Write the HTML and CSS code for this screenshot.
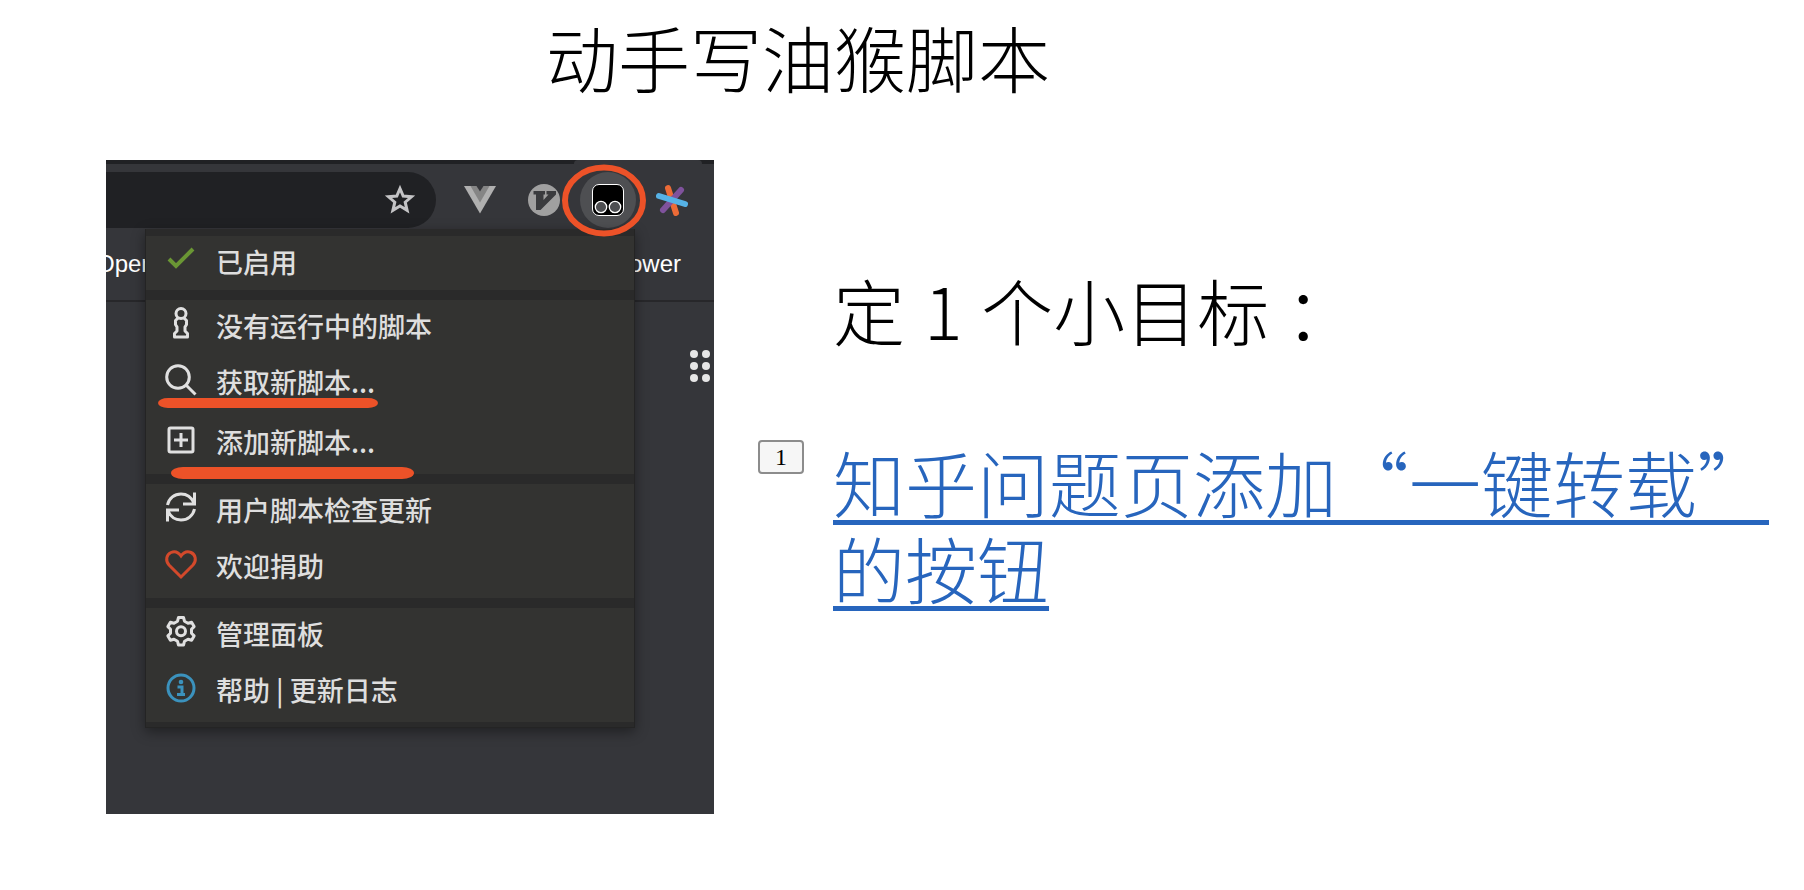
FILE: index.html
```
<!DOCTYPE html>
<html lang="zh-CN">
<head>
  <meta charset="UTF-8" />
  <meta name="viewport" content="width=device-width, initial-scale=1.0"/>
  <title>动手写油猴脚本</title>
  <link rel="stylesheet" href="styles.css">
</head>
<body>
  <h1>动手写油猴脚本</h1>

  <main class="slide">
    <div class="browser">
      <div class="tabs"><div class="tab"></div></div>
      <div class="toolbar">
        <div class="address">
          <svg width="32" height="32" viewBox="0 0 32 32" fill="none" stroke="#c4c4c6" stroke-width="3"><path d="M16 4.500l3.200 7.600 8.300.7-6.300 5.400 1.900 8.100-7.100-4.300-7.100 4.300 1.900-8.100-6.300-5.400 8.300-.7z"/></svg>
        </div>
        <div class="extensions">
          <button class="extension" aria-label="Vue">
            <svg width="32" height="32" viewBox="0 0 32 32"><path fill="#b0b0b0" d="M0 2h32L16 29.500z"/><path fill="#858585" d="M6.500 2h19L16 18.500z"/><path fill="#35363a" d="M12.500 2h7L16 7.500z"/></svg>
          </button>
          <button class="extension" aria-label="Vimium">
            <svg width="32" height="32" viewBox="0 0 32 32"><circle cx="16" cy="16" r="16" fill="#a0a0a0"/><path fill="#3a3b3e" d="M5.500 7h11.500v3.500h-1.500v5.500l5-5.500h-2V7H28v3.500L12.500 26H8V10.500H5.500z"/></svg>
          </button>
          <button class="extension current" aria-label="Tampermonkey">
            <svg width="32" height="32" viewBox="0 0 32 32"><rect x=".5" y=".5" width="31" height="31" rx="6.500" fill="#000" stroke="#fff"/><g fill="#4e4f52" stroke="#fff" stroke-width="1.300"><circle cx="9" cy="23" r="5.700"/><circle cx="23" cy="23" r="5.700"/></g></svg>
          </button>
          <button class="extension" aria-label="扩展">
            <svg width="32" height="32" viewBox="0 0 32 32" stroke-width="6" stroke-linecap="round"><path stroke="#ec6b37" d="M12 4l8 25"/><path stroke="#7f529c" d="M25 6L7 26"/><path stroke="#56b2e6" d="M3 12l26 8"/></svg>
          </button>
        </div>
      </div>
      <div class="bookmarks">
        <span>Open</span>
        <span>Power</span>
      </div>
      <div class="page">
        <svg width="20" height="32" viewBox="0 0 20 32" fill="#e6e6e6"><circle cx="4" cy="4" r="4"/><circle cx="16" cy="4" r="4"/><circle cx="4" cy="16" r="4"/><circle cx="16" cy="16" r="4"/><circle cx="4" cy="28" r="4"/><circle cx="16" cy="28" r="4"/></svg>
      </div>

      <div class="menu">
        <div class="group">
          <button class="item">
            <svg viewBox="0 0 34 40" stroke="#6a9634"><path stroke-width="4" d="M5 17l7 7L29 7"/></svg>
            已启用
          </button>
        </div>
        <div class="group">
          <button class="item">
            <svg viewBox="0 0 34 40"><circle cx="17" cy="7.500" r="5"/><path stroke-linejoin="round" d="M14 12l-2.500 2.500v4l1.500 2.500v4l-2.500 2.500V31h13v-3.500L21 25v-4l1.500-2.500v-4L20 12"/></svg>
            没有运行中的脚本
          </button>
          <button class="item">
            <svg viewBox="0 0 34 40"><circle cx="14" cy="15" r="11.300"/><path d="M22.500 23.500l9 9"/></svg>
            获取新脚本...
          </button>
          <button class="item add">
            <svg viewBox="0 0 34 40"><rect x="5" y="6" width="24" height="24" rx="1.500"/><path d="M17 11v14M10 18h14"/></svg>
            添加新脚本...
          </button>
        </div>
        <div class="group">
          <button class="item">
            <svg viewBox="0 0 34 40"><path d="M3.500 15C5 8 10.500 4 17 4c6 0 10.500 3.500 13 9M30.500 2.500V14H19M30.500 19C29 26 23.500 30 17 30c-6 0-10.500-3.500-13-9M3.500 31.500V20H15"/></svg>
            用户脚本检查更新
          </button>
          <button class="item">
            <svg viewBox="0 0 34 40" stroke="#d3492b"><path d="M17 31L5 19C1 14.500 2.500 8.500 7 6.500c4-1.700 7.500 0 10 3.500 2.500-3.500 6-5.200 10-3.500 4.500 2 6 8 2 12.500z"/></svg>
            欢迎捐助
          </button>
        </div>
        <div class="group">
          <button class="item">
            <svg viewBox="0 0 34 40"><path stroke-linejoin="round" d="M14.500 3.500h5l1 3.700 3.500 2 3.600-1 2.500 4.400-2.600 2.700v3.900l2.600 2.700-2.500 4.400-3.600-1-3.500 2-1 3.700h-5l-1-3.700-3.500-2-3.600 1-2.500-4.400 2.600-2.700v-3.900l-2.600-2.700 2.500-4.400 3.600 1 3.500-2z"/><circle cx="17" cy="17.300" r="4.500"/></svg>
            管理面板
          </button>
          <button class="item">
            <svg viewBox="0 0 34 40" stroke="#3b92bd"><circle cx="17" cy="18" r="13"/><circle cx="17" cy="12" r="2.300" fill="#3b92bd" stroke="none"/><path d="M13.500 17H18v7M13 24.500h8"/></svg>
            帮助 | 更新日志
          </button>
        </div>
      </div>

      <!-- red marker strokes -->
      <svg class="marker" viewBox="0 0 608 654" fill="none">
        <ellipse cx="498" cy="40.500" rx="39" ry="33" stroke="#ed5228" stroke-width="6"/>
        <rect x="52" y="238" width="220" height="10" rx="10" ry="5" fill="#ed5228"/>
        <rect x="65" y="307" width="243" height="12" rx="12" ry="6" fill="#ed5228"/>
      </svg>
    </div>

    <div class="goal">
      <p>定 <span class="number">1</span> 个小目标 ：</p>
      <span class="step">1</span>
      <a href="#">知乎问题页添加“一键转载”的按钮</a>
    </div>
  </main>
</body>
</html>
```
FILE: styles.css
```
body {
  font-family: 'Noto Sans CJK SC', sans-serif;
  background-color: #fff;
  color: #000;
  margin: 0;
}

h1 {
  margin: 0;
  padding: 4px 208px 4px 0;
  text-align: center;
  font-size: 72px;
  line-height: 104px;
  font-weight: 300;
}

.slide {
  display: flex;
  align-items: flex-start;
  gap: 44px;
  padding: 48px 24px 76px 106px;
}

/* browser window */
.browser {
  position: relative;
  flex: 0 0 608px;
  min-height: 654px;
  display: flex;
  flex-direction: column;
  overflow: hidden;
  background-color: #35363a;
}

.tabs {
  display: flex;
  justify-content: flex-end;
  height: 4px;
  padding-right: 12px;
  background-color: #202124;
}

.tab {
  width: 128px;
  border-radius: 8px 8px 0 0;
  background-color: #35363a;
}

.toolbar {
  display: flex;
  gap: 12px;
  padding-top: 8px;
}

.address {
  display: flex;
  align-items: center;
  justify-content: flex-end;
  width: 330px;
  height: 56px;
  padding-right: 20px;
  box-sizing: border-box;
  border-radius: 0 28px 28px 0;
  background-color: #202124;
}

.extensions {
  display: flex;
  gap: 8px;
  padding-left: 4px;
}

.extension {
  display: flex;
  align-items: center;
  justify-content: center;
  width: 56px;
  height: 56px;
  padding: 0;
  border: none;
  border-radius: 50%;
  background: none;
  cursor: pointer;
}

.current {
  background-color: #4e4f52;
}

.bookmarks {
  display: flex;
  justify-content: space-between;
  height: 72px;
  padding-right: 33px;
  margin-left: -10px;
  border-bottom: 2px solid #27272a;
  font-family: 'Liberation Sans', sans-serif;
  font-size: 24px;
  line-height: 72px;
  color: #fff;
}

.page {
  flex: 1;
  display: flex;
  justify-content: flex-end;
  padding: 48px 4px 0 0;
}

/* extension popup */
.menu {
  position: absolute;
  top: 69px;
  left: 39px;
  width: 488px;
  display: flex;
  flex-direction: column;
  gap: 10px;
  padding: 7px 0 5px;
  border: 1px solid #242424;
  border-top: none;
  background-color: #2a2a2a;
  box-shadow: 0 4px 12px rgba(0,0,0,0.4);
}

.group {
  display: flex;
  flex-direction: column;
  gap: 2px;
  padding-bottom: 4px;
  background-color: #333331;
}

.group:first-child {
  padding-bottom: 0;
}

.item {
  display: flex;
  align-items: center;
  gap: 18px;
  height: 54px;
  padding: 0 18px 2px;
  border: none;
  background: none;
  font-family: inherit;
  font-size: 27px;
  line-height: 52px;
  font-weight: 500;
  color: #dedede;
  text-align: left;
  cursor: pointer;
}

.item svg {
  width: 34px;
  height: 40px;
  fill: none;
  stroke-width: 3;
}

.item svg:not([stroke]) {
  stroke: #e0e0e0;
}

.add {
  margin-top: 4px;
}

.marker {
  position: absolute;
  top: 0;
  left: 0;
  width: 608px;
  height: 654px;
  pointer-events: none;
}

/* right side text */
.goal {
  flex: 1;
  display: grid;
  grid-template-columns: 46px 1fr;
  column-gap: 29px;
  row-gap: 88px;
  padding-top: 106px;
  font-size: 72px;
  line-height: 86px;
  font-weight: 300;
}

.goal p {
  grid-column: 2;
  margin: 0;
}

.number {
  margin: 0 3px;
}

.goal a {
  margin-top: -2px;
  color: #2765bd;
  text-decoration: underline;
  text-decoration-thickness: 5px;
  text-underline-offset: 8px;
  text-decoration-skip-ink: none;
}

.step {
  width: 42px;
  height: 30px;
  border: 2px solid #8c8c8c;
  border-radius: 4px;
  background-color: #f6f6f6;
  font-family: 'Liberation Serif', serif;
  font-size: 24px;
  line-height: 30px;
  font-weight: 400;
  text-align: center;
}
```
